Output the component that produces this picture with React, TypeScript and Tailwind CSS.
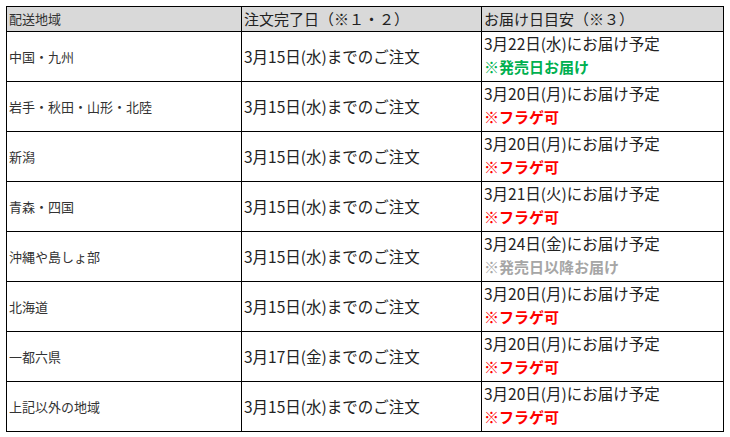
import React from 'react';

type Note = { text: string; tone: 'green' | 'red' | 'gray' };

interface Row {
  area: string;
  order: string;
  delivery: string;
  note: Note;
}

const FLAGE: Note = { text: '※フラゲ可', tone: 'red' };

const rows: Row[] = [
  { area: '中国・九州', order: '3月15日(水)までのご注文', delivery: '3月22日(水)にお届け予定', note: { text: '※発売日お届け', tone: 'green' } },
  { area: '岩手・秋田・山形・北陸', order: '3月15日(水)までのご注文', delivery: '3月20日(月)にお届け予定', note: FLAGE },
  { area: '新潟', order: '3月15日(水)までのご注文', delivery: '3月20日(月)にお届け予定', note: FLAGE },
  { area: '青森・四国', order: '3月15日(水)までのご注文', delivery: '3月21日(火)にお届け予定', note: FLAGE },
  { area: '沖縄や島しょ部', order: '3月15日(水)までのご注文', delivery: '3月24日(金)にお届け予定', note: { text: '※発売日以降お届け', tone: 'gray' } },
  { area: '北海道', order: '3月15日(水)までのご注文', delivery: '3月20日(月)にお届け予定', note: FLAGE },
  { area: '一都六県', order: '3月17日(金)までのご注文', delivery: '3月20日(月)にお届け予定', note: FLAGE },
  { area: '上記以外の地域', order: '3月15日(水)までのご注文', delivery: '3月20日(月)にお届け予定', note: FLAGE },
];

const toneClass: Record<Note['tone'], string> = {
  green: 'text-[#00b050]',
  red: 'text-[#ff0000]',
  gray: 'text-[#a6a6a6]',
};

const cell = 'border-r border-b border-black pl-[2px]';

export default function App() {
  return (
    <div
      className="w-[730px] h-[437px] bg-white pl-[6px] pt-[6px]"
      style={{ fontFamily: '"Noto Sans CJK JP", "Noto Sans", sans-serif' }}
    >
      <div className="grid grid-cols-[235px_240px_242px] w-max border-l border-t border-black text-[#222]">
        {/* header */}
        <div className={`${cell} h-[25px] bg-[#d9d9d9] flex items-center text-[13px] text-[#333]`}>配送地域</div>
        <div className={`${cell} h-[25px] bg-[#d9d9d9] flex items-center text-[15px]`}>注文完了日（※１・２）</div>
        <div className={`${cell} h-[25px] bg-[#d9d9d9] flex items-center text-[15px]`}>お届け日目安（※３）</div>

        {rows.map((r, i) => (
          <React.Fragment key={i}>
            <div className={`${cell} h-[50px] flex items-center text-[13px] text-[#333]`}>{r.area}</div>
            <div className={`${cell} h-[50px] flex items-center text-[15.5px]`}>{r.order}</div>
            <div className={`${cell} h-[50px] flex flex-col text-[15.5px] leading-[23px]`}>
              <span>{r.delivery}</span>
              <span className={`font-bold text-[15px] ${toneClass[r.note.tone]}`}>{r.note.text}</span>
            </div>
          </React.Fragment>
        ))}
      </div>
    </div>
  );
}
